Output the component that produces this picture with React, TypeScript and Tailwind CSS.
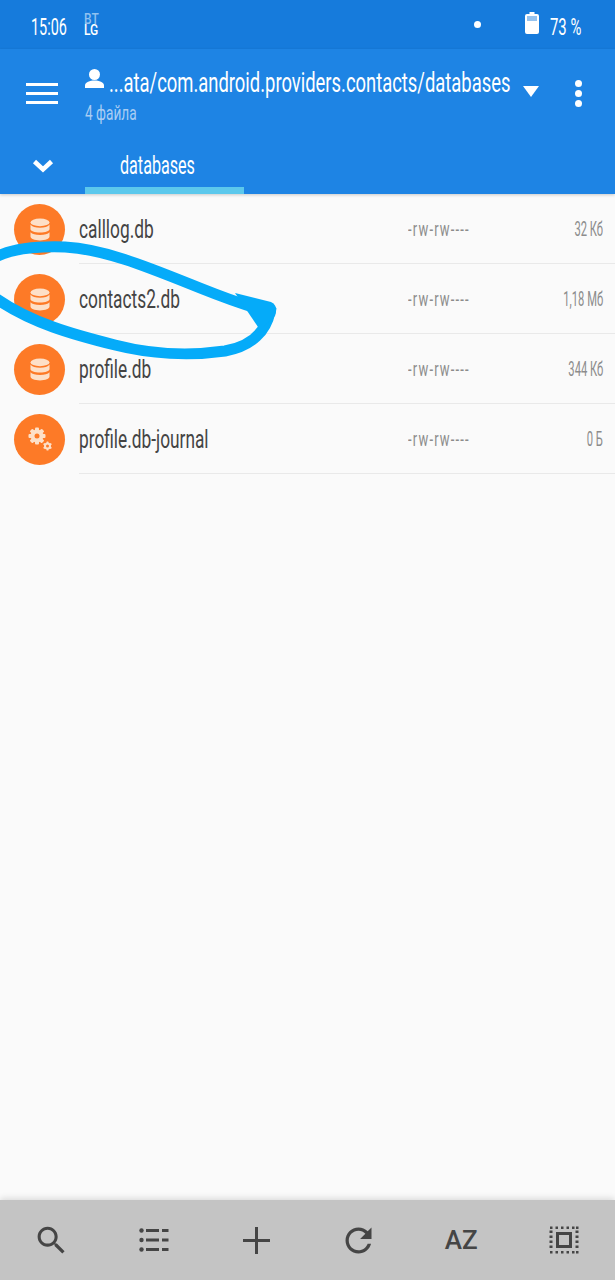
const files = [
  { name: 'calllog.db', perms: '-rw-rw----', size: '32 Кб', kind: 'db' },
  { name: 'contacts2.db', perms: '-rw-rw----', size: '1,18 Мб', kind: 'db' },
  { name: 'profile.db', perms: '-rw-rw----', size: '344 Кб', kind: 'db' },
  { name: 'profile.db-journal', perms: '-rw-rw----', size: '0 Б', kind: 'gear' },
];

function DbIcon() {
  return (
    <svg width="20" height="23" viewBox="0 0 20 21" preserveAspectRatio="none" fill="#fde0c8" aria-hidden="true">
      <ellipse cx="10" cy="4" rx="9.500" ry="3.500" />
      <path d="M.5 6c1.500 2 5 3 9.500 3s8-1 9.500-3v4c0 2-4 3.200-9.500 3.200S.5 12 .5 10z" />
      <path d="M.5 13c1.500 1.800 5 2.500 9.500 2.500s8-.7 9.500-2.500v4c0 2-4 3.500-9.500 3.500S.5 19 .5 17z" />
    </svg>
  );
}

function GearIcon() {
  return (
    <svg width="26" height="26" viewBox="0 0 26 26" fill="#fde0c8" aria-hidden="true">
      <g transform="translate(10 10)">
        {[0, 45, 90, 135].map((a) => (
          <rect key={a} x="-2" y="-8.500" width="4" height="17" rx="1" transform={`rotate(${a})`} />
        ))}
        <circle r="6.500" />
        <circle r="2.500" fill="#fd7a27" />
      </g>
      <g transform="translate(20.500 20)">
        {[0, 60, 120].map((a) => (
          <rect key={a} x="-1" y="-4.500" width="2" height="9" rx="0.500" transform={`rotate(${a})`} />
        ))}
        <circle r="3.500" />
        <circle r="1.500" fill="#fd7a27" />
      </g>
    </svg>
  );
}

function SearchIcon() {
  return (
    <svg width="37" height="37" viewBox="0 0 24 24" fill="#454545" aria-hidden="true">
      <path d="M15.500 14h-.79l-.28-.27C15.410 12.590 16 11.110 16 9.500 16 5.910 13.090 3 9.500 3S3 5.910 3 9.500 5.910 16 9.500 16c1.610 0 3.090-.59 4.230-1.570l.27.28v.79l5 4.990L20.490 19l-4.990-5zm-6 0C7.010 14 5 11.990 5 9.500S7.010 5 9.500 5 14 7.010 14 9.500 11.990 14 9.500 14z" />
    </svg>
  );
}

function RefreshIcon() {
  return (
    <svg width="39" height="39" viewBox="0 0 24 24" fill="#454545" aria-hidden="true">
      <path d="M17.650 6.350C16.200 4.900 14.210 4 12 4c-4.420 0-7.990 3.580-7.990 8s3.570 8 7.990 8c3.730 0 6.840-2.550 7.730-6h-2.080c-.82 2.330-3.040 4-5.650 4-3.310 0-6-2.690-6-6s2.690-6 6-6c1.660 0 3.140.69 4.220 1.780L13 11h7V4l-2.350 2.350z" />
    </svg>
  );
}

function PlusIcon() {
  return (
    <svg width="27" height="27" viewBox="0 0 27 27" fill="#454545" aria-hidden="true">
      <rect x="12" y="0" width="3" height="27" />
      <rect x="0" y="12" width="27" height="3" />
    </svg>
  );
}

function ListIcon() {
  return (
    <svg width="30" height="24" viewBox="0 0 30 24" fill="#454545" aria-hidden="true">
      {[2.500, 12, 21.500].map((y) => (
        <g key={y}>
          <circle cx="2.500" cy={y} r="2.200" />
          <rect x="7" y={y - 1.500} width="13" height="3" />
          <rect x="23" y={y - 1.500} width="6.500" height="3" />
        </g>
      ))}
    </svg>
  );
}

function SelectIcon() {
  return (
    <svg width="30" height="28" viewBox="0 0 30 28" fill="#454545" aria-hidden="true">
      <rect x="8.500" y="7.500" width="13" height="13" fill="none" stroke="#454545" strokeWidth="3" />
      {[1, 6.500, 12, 17.500, 23, 27].map((p) => (
        <g key={p}>
          <rect x={p} y="0.500" width="2.500" height="2.500" />
          <rect x={p} y="25" width="2.500" height="2.500" />
        </g>
      ))}
      {[4.500, 9.500, 14.500, 19.500].map((p) => (
        <g key={p}>
          <rect x="0.500" y={p} width="3" height="2.500" />
          <rect x="26.500" y={p} width="3" height="2.500" />
        </g>
      ))}
    </svg>
  );
}

function Narrow({ children, className }: { children: React.ReactNode; className: string }) {
  return <span className={`inline-block whitespace-nowrap ${className}`}>{children}</span>;
}

export default function App() {
  return (
    <div className="relative flex h-[1280px] w-[615px] flex-col overflow-hidden bg-[#fafafa] font-['Roboto',sans-serif]">
      {/* status bar */}
      <div className="flex h-[49px] items-center bg-[#167bdc] text-white">
        <Narrow className="ml-[31px] mt-[5px] w-[36px] origin-left scale-x-[0.6] text-[24px] leading-none">15:06</Narrow>
        <div className="relative ml-[17px] h-[30px] w-[16px] text-[15px] font-medium leading-none">
          <span className="absolute left-0 top-[2px] origin-left scale-x-[0.8] text-[#8fc1f0]">BT</span>
          <span className="absolute left-0 top-[13px] origin-left scale-x-[0.8]">LG</span>
        </div>
        <div className="ml-auto h-[7px] w-[7px] rounded-full bg-white" />
        <svg className="ml-[44px] -mt-[4px]" width="14" height="22" viewBox="0 0 14 22" fill="white" aria-hidden="true">
          <path d="M4.500 0h5v2h2.500a2 2 0 0 1 2 2v16a2 2 0 0 1-2 2h-10a2 2 0 0 1-2-2v-16a2 2 0 0 1 2-2h2.500z" />
          <rect x="2" y="4" width="10" height="5" fill="#167bdc" opacity="0.45" />
        </svg>
        <Narrow className="ml-[11px] mr-[31px] mt-[5px] w-[34px] origin-left scale-x-[0.62] text-[24px] leading-none">73 %</Narrow>
      </div>

      {/* toolbar */}
      <div className="flex h-[145px] flex-col bg-[#1e84e4] text-white shadow-[0_1px_3px_rgba(0,0,0,0.2)]">
        <div className="flex h-[91px] items-start">
          <div className="ml-[26px] mt-[34px] flex w-[32px] flex-col gap-[6px]">
            <div className="h-[3px] bg-white" />
            <div className="h-[3px] bg-white" />
            <div className="h-[3px] bg-white" />
          </div>
          <div className="ml-[27px] w-[425px]">
            <div className="flex h-[54px] items-center pt-[14px]">
              <svg className="-mt-[9px]" width="19" height="20" viewBox="0 0 19 20" fill="white" aria-hidden="true">
                <circle cx="9.500" cy="5.500" r="5.500" />
                <path d="M0 19v-2.500c0-3.500 5-5 9.500-5s9.500 1.500 9.500 5v2.500z" />
              </svg>
              <Narrow className="ml-[5px] w-[401px] origin-left scale-x-[0.657] text-[28px] leading-none">...ata/com.android.providers.contacts/databases</Narrow>
            </div>
            <Narrow className="w-[52px] origin-left scale-x-[0.65] text-[21px] leading-none text-[#a9cdf3]">4 файла</Narrow>
          </div>
          <div className="ml-[13px] mt-[37px] h-0 w-0 border-x-[8px] border-t-[11px] border-x-transparent border-t-white" />
          <div className="ml-[36px] mt-[31px] flex flex-col gap-[3px]">
            <div className="h-[7px] w-[7px] rounded-full bg-white" />
            <div className="h-[7px] w-[7px] rounded-full bg-white" />
            <div className="h-[7px] w-[7px] rounded-full bg-white" />
          </div>
        </div>
        <div className="flex h-[54px] items-stretch">
          <svg className="ml-[32px] mt-[19px]" width="22" height="14" viewBox="0 0 22 14" fill="none" stroke="white" strokeWidth="4.500" aria-hidden="true">
            <path d="M2.500 2.500L11 10.500L19.500 2.500" />
          </svg>
          <div className="ml-[31px] flex w-[159px] flex-col justify-between">
            <Narrow className="ml-[35px] mt-[13px] w-[75px] origin-left scale-x-[0.645] text-[25px] leading-none">databases</Narrow>
            <div className="h-[7px] w-full bg-[#5cc8ec]" />
          </div>
        </div>
      </div>

      {/* file list */}
      <div className="flex-1">
        {files.map((f) => (
          <div key={f.name} className="flex h-[70px] items-center">
            <div className="ml-[14px] flex h-[51px] w-[51px] shrink-0 items-center justify-center rounded-full bg-[#fd7a27]">
              {f.kind === 'db' ? <DbIcon /> : <GearIcon />}
            </div>
            <div className="ml-[14px] flex h-full flex-1 items-center border-b border-[#e9e9e9] pr-[12px]">
              <Narrow className="w-[329px] origin-left scale-x-[0.665] text-[26px] leading-none text-[#444444]">{f.name}</Narrow>
              <Narrow className="w-[110px] origin-left scale-x-[0.65] text-[20px] leading-none tracking-[1.8px] text-[#8c8c8c]">{f.perms}</Narrow>
              <span className="flex flex-1 justify-end">
                <Narrow className="origin-right scale-x-[0.56] text-[20px] leading-none text-[#8c8c8c]">{f.size}</Narrow>
              </span>
            </div>
          </div>
        ))}
      </div>

      {/* bottom bar */}
      <div className="grid h-[80px] grid-cols-6 items-center justify-items-center bg-[#c4c4c4] shadow-[0_-2px_6px_rgba(0,0,0,0.12)]">
        <SearchIcon />
        <ListIcon />
        <PlusIcon />
        <RefreshIcon />
        <span className="text-[26px] font-medium leading-none text-[#454545]">AZ</span>
        <SelectIcon />
      </div>

      {/* hand-drawn marker over the list */}
      <svg className="pointer-events-none absolute left-0 top-0" width="615" height="400" viewBox="0 0 615 400" fill="none" aria-hidden="true">
        <path
          d="M-6 258C10 249 35 246 65 247C105 249 150 268 200 288C225 298 250 307 270 312C266 331 252 346 225 351C190 356 150 354 115 345C75 335 30 323 -6 297"
          stroke="#05abf9"
          strokeWidth="11"
          strokeLinecap="round"
        />
        <path d="M235 293L271 302C277 305 277 310 275 316L260 330z" fill="#05abf9" />
      </svg>
    </div>
  );
}
